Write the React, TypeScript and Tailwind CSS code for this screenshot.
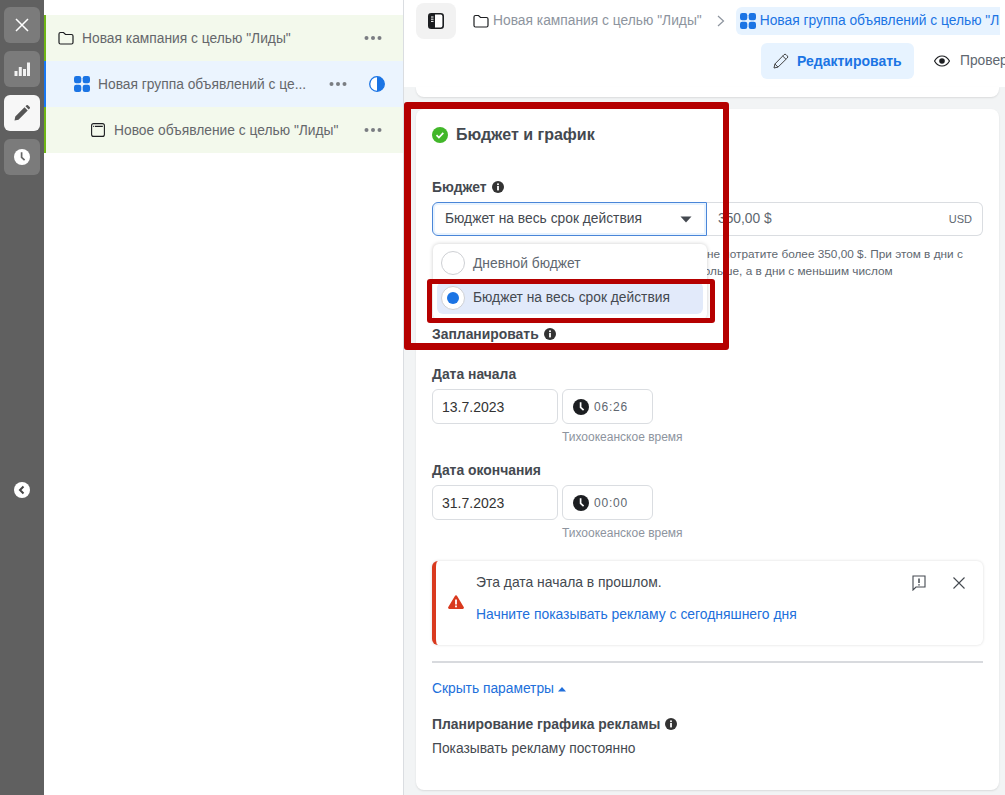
import type { ReactNode } from 'react';

function Folder({ className }: { readonly className: string }) {
  return (
    <svg viewBox="0 0 16 14" className={className} fill="none" stroke="#1c1e21" strokeWidth="1.2">
      <path d="M1 3a1.500 1.500 0 0 1 1.500-1.500h3L7.500 3.500h6A1.500 1.500 0 0 1 15 5v6.500a1.500 1.500 0 0 1-1.500 1.500h-11A1.500 1.500 0 0 1 1 11.500z" />
    </svg>
  );
}

function Grid({ className }: { readonly className: string }) {
  return (
    <svg viewBox="0 0 16 16" className={className} fill="#1b74e4">
      <rect x="0" y="0" width="7.300" height="7.300" rx="2.200" />
      <rect x="8.700" y="0" width="7.300" height="7.300" rx="2.200" />
      <rect x="0" y="8.700" width="7.300" height="7.300" rx="2.200" />
      <rect x="8.700" y="8.700" width="7.300" height="7.300" rx="2.200" />
    </svg>
  );
}

function Dots() {
  return (
    <svg viewBox="0 0 18 4" className="h-1 w-[18px]" fill="#7a7d82">
      <circle cx="2.500" cy="2" r="2" />
      <circle cx="9" cy="2" r="2" />
      <circle cx="15.500" cy="2" r="2" />
    </svg>
  );
}

function Info() {
  return (
    <svg viewBox="0 0 12 12" className="h-3 w-3">
      <circle cx="6" cy="6" r="6" fill="#333" />
      <circle cx="6" cy="3.200" r="1" fill="#fff" />
      <rect x="5.100" y="5" width="1.800" height="4.400" fill="#fff" />
    </svg>
  );
}

function Clock({ className, dark }: { readonly className: string; readonly dark?: boolean }) {
  return (
    <svg viewBox="0 0 16 16" className={className}>
      <circle cx="8" cy="8" r="8" fill={dark ? '#1c1e21' : '#fff'} />
      <path d="M7.600 3.200v5.200l3 2.800" fill="none" stroke={dark ? '#fff' : '#666'} strokeWidth="1.700" />
    </svg>
  );
}

function RailButton({ active, children }: { readonly active?: boolean; readonly children: ReactNode }) {
  return (
    <div className={`flex h-9 w-9 items-center justify-center rounded-md ${active ? 'bg-[#f7f7f7]' : 'bg-[#7b7b7b]'}`}>
      {children}
    </div>
  );
}

function TreeRow({
  active,
  indent,
  icon,
  label,
  status,
}: {
  readonly active?: boolean;
  readonly indent: string;
  readonly icon: ReactNode;
  readonly label: string;
  readonly status?: ReactNode;
}) {
  return (
    <div
      className={`flex h-[46px] items-center border-l-2 ${indent} ${
        active ? 'border-[#1877f2] bg-[#ebf4fe]' : 'border-[#6fb516] bg-[#f3f9ec]'
      }`}
    >
      <div className="flex w-4 shrink-0 justify-center">{icon}</div>
      <span className="ml-2 min-w-0 whitespace-nowrap pt-0.5 text-[13.8px] text-[#65676b]">{label}</span>
      <div className="ml-auto flex items-center">
        <Dots />
        {status}
      </div>
    </div>
  );
}

function FieldLabel({ children, className }: { readonly children: ReactNode; readonly className: string }) {
  return (
    <div className={`flex h-5 items-center gap-[5px] text-[13.9px] font-bold text-[#444950] ${className}`}>
      {children}
    </div>
  );
}

function DateFields({ date, time }: { readonly date: string; readonly time: string }) {
  return (
    <>
      <div className="mt-[5px] flex gap-1">
        <div className="flex h-[35px] w-[126px] items-center rounded-md border border-[#dadde1] pl-[9px] text-sm text-[#333]">
          {date}
        </div>
        <div className="flex h-[35px] w-[91px] items-center gap-[5px] rounded-md border border-[#dadde1] pl-2.5 text-xs tracking-[0.8px] text-[#606770]">
          <Clock className="h-4 w-4" dark />
          {time}
        </div>
      </div>
      <div className="ml-[130px] mt-1 flex h-[18px] items-center whitespace-nowrap text-xs text-[#8d949e]">
        Тихоокеанское время
      </div>
    </>
  );
}

export default function App() {
  return (
    <div className="relative flex h-[795px] w-[1005px] overflow-hidden bg-white font-['Liberation_Sans',sans-serif]">
      <aside className="flex w-11 shrink-0 flex-col items-center gap-2 bg-[#606060] pt-[7px]">
        <RailButton>
          <svg viewBox="0 0 14 14" className="h-3.5 w-3.5" stroke="#fff" strokeWidth="1.500">
            <path d="M1 1l12 12M13 1L1 13" />
          </svg>
        </RailButton>
        <RailButton>
          <svg viewBox="0 0 16 16" className="h-4 w-4" fill="#f2f2f2">
            <rect x="0.500" y="10" width="3" height="5" />
            <rect x="4.800" y="6" width="3" height="9" />
            <rect x="9" y="8" width="3" height="7" />
            <rect x="13" y="1.500" width="3" height="13.500" />
          </svg>
        </RailButton>
        <RailButton active>
          <svg viewBox="0 0 16 16" className="h-4 w-4" fill="#555">
            <path d="M0.500 15.500l.8-4L10.500 2.300l3.200 3.200-9.200 9.200zM11.500 1.300l1-1a1 1 0 0 1 1.400 0l1.800 1.800a1 1 0 0 1 0 1.400l-1 1z" />
          </svg>
        </RailButton>
        <RailButton>
          <Clock className="h-4 w-4" />
        </RailButton>
        <div className="mt-[299px] flex h-4 w-4 items-center justify-center rounded-full bg-white">
          <svg viewBox="0 0 10 10" className="h-2.5 w-2.5" fill="none" stroke="#444" strokeWidth="2">
            <path d="M6.500 1.500L3 5l3.500 3.500" />
          </svg>
        </div>
      </aside>

      <section className="w-[360px] shrink-0 border-r border-[#dadde1] pt-[15px]">
        <TreeRow indent="pl-3 pr-[21px]" icon={<Folder className="h-[14px] w-4" />} label={'Новая кампания с целью "Лиды"'} />
        <TreeRow
          active
          indent="pl-7 pr-[18px]"
          icon={<Grid className="h-4 w-4" />}
          label="Новая группа объявлений с це..."
          status={
            <svg viewBox="0 0 16 16" className="ml-[22px] h-4 w-4">
              <circle cx="8" cy="8" r="7.300" fill="#fff" stroke="#1b74e4" strokeWidth="1.300" />
              <path d="M8 0.700a7.300 7.300 0 0 1 0 14.600z" fill="#1b74e4" />
            </svg>
          }
        />
        <TreeRow
          indent="pl-[44px] pr-[21px]"
          icon={
            <svg viewBox="0 0 14 14" className="h-3.5 w-3.5" fill="none" stroke="#1c1e21" strokeWidth="1.100">
              <rect x="0.600" y="0.600" width="12.800" height="12.800" rx="2" />
              <path d="M2 3.400h.8M3.800 3.400h8" />
            </svg>
          }
          label={'Новое объявление с целью "Лиды"'}
        />
      </section>

      <main className="flex min-w-0 flex-1 flex-col bg-[#f2f4f5]">
        <header className="h-[87px] overflow-hidden bg-white">
          <div className="flex items-center pl-3 pr-[5px] pt-[3px]">
            <div className="flex h-9 w-10 shrink-0 items-center justify-center rounded-lg bg-[#f2f2f2]">
              <svg viewBox="0 0 16 16" className="h-4 w-4">
                <rect x="0.800" y="0.800" width="14.400" height="14.400" rx="2.500" fill="#fff" stroke="#1c1e21" strokeWidth="1.600" />
                <path d="M3 1h4v14H3a2 2 0 0 1-2-2V3a2 2 0 0 1 2-2z" fill="#1c1e21" />
                <path d="M3 4h2.500M3 6.200h2.500M3 8.400h2.500" stroke="#fff" />
              </svg>
            </div>
            <Folder className="ml-[17px] h-[14px] w-4 shrink-0" />
            <span className="ml-1 whitespace-nowrap text-[13.8px] text-[#8d949e]">Новая кампания с целью "Лиды"</span>
            <svg viewBox="0 0 8 12" className="ml-[15px] h-3 w-2 shrink-0" fill="none" stroke="#8d949e" strokeWidth="1.200">
              <path d="M1 1l5.500 5L1 11" />
            </svg>
            <div className="ml-[11px] flex h-7 min-w-0 flex-1 items-center overflow-hidden rounded-l-md bg-[#e7f3ff] pl-1">
              <Grid className="h-4 w-4 shrink-0" />
              <span className="ml-1 whitespace-nowrap text-[13.8px] text-[#1b74e4]">Новая группа объявлений с целью "Лиды"</span>
            </div>
          </div>
          <div className="mt-1 flex items-center pl-[357px]">
            <div className="flex h-9 w-[153px] shrink-0 items-center rounded-md bg-[#e7f3ff] pl-3">
              <svg viewBox="0 0 16 16" className="h-4 w-4" fill="none" stroke="#444" strokeWidth="1">
                <path d="M1 15l.9-4L11 1.700a1.500 1.500 0 0 1 2.100 0l1.200 1.200a1.500 1.500 0 0 1 0 2.100L5 14.100zM1.900 11L5 14.100M9.700 3l3.300 3.300" />
              </svg>
              <span className="ml-[8px] whitespace-nowrap text-sm font-bold text-[#1b74e4]">Редактировать</span>
            </div>
            <svg viewBox="0 0 16 12" className="ml-5 h-3 w-4 shrink-0">
              <path d="M0.500 6C2.500 2.500 5 1 8 1s5.500 1.500 7.500 5c-2 3.500-4.500 5-7.500 5s-5.500-1.500-7.500-5z" fill="none" stroke="#1c1e21" strokeWidth="1.200" />
              <circle cx="8" cy="6" r="2.800" fill="#1c1e21" />
            </svg>
            <span className="ml-[10px] whitespace-nowrap text-[13.8px] text-[#606770]">Проверить</span>
          </div>
        </header>

        <div className="mx-3 mr-1.5 h-2.5 rounded-b-lg bg-white shadow-[0_1px_2px_rgba(0,0,0,0.1)]" />

        <div className="mx-3 mb-[5px] mr-1.5 mt-3 flex-1 rounded-lg bg-white px-4 pt-4 shadow-[0_1px_2px_rgba(0,0,0,0.1)]">
          <div className="flex h-5 items-center gap-2 text-base font-bold text-[#444950]">
            <svg viewBox="0 0 16 16" className="h-4 w-4">
              <circle cx="8" cy="8" r="8" fill="#42b72a" />
              <path d="M4.500 8.200l2.400 2.300 4.400-4.600" fill="none" stroke="#fff" strokeWidth="1.700" />
            </svg>
            Бюджет и график
          </div>

          <FieldLabel className="mt-8">
            Бюджет <Info />
          </FieldLabel>
          <div className="mt-[5px] flex h-[34px] w-[551px]">
            <div className="flex w-[275px] shrink-0 items-center justify-between rounded-l-md border border-[#4a86d8] pl-3 pr-[14px] text-[13.8px] text-[#444950] shadow-[inset_0_0_0_2px_#e7f3ff]">
              Бюджет на весь срок действия
              <svg viewBox="0 0 12 7" className="h-[7px] w-3" fill="#444950">
                <path d="M0.500 0.500h11L6 6.500z" />
              </svg>
            </div>
            <div className="flex flex-1 items-center justify-between rounded-r-md border border-l-0 border-[#dadde1] pl-[11px] pr-2.5 text-[13.8px] text-[#606770]">
              350,00 $
              <span className="text-[11px] text-[#606770]">USD</span>
            </div>
          </div>
          <div className="mt-2.5 whitespace-nowrap text-[11.8px] leading-[17px] text-[#606770]">
            <div className="pl-[275px]">не потратите более 350,00 $. При этом в дни с</div>
            <div className="pl-[265px]">больше, а в дни с меньшим числом</div>
          </div>

          <FieldLabel className="mt-[44px]">
            Запланировать <Info />
          </FieldLabel>

          <FieldLabel className="mt-5">Дата начала</FieldLabel>
          <DateFields date="13.7.2023" time="06:26" />
          <FieldLabel className="mt-3.5">Дата окончания</FieldLabel>
          <DateFields date="31.7.2023" time="00:00" />

          <div className="mt-[19px] flex h-[84px] w-[551px] rounded-md border-l-[4px] border-[#d9391e] bg-white pl-3 pr-[18px] shadow-[0_0_3px_rgba(0,0,0,0.15)]">
            <svg viewBox="0 0 16 14" className="mt-[34px] h-3.5 w-4 shrink-0" fill="#d9391e">
              <path d="M8 0.300a1.300 1.300 0 0 1 1.100.6l6.600 11a1.300 1.300 0 0 1-1.100 2H1.400a1.300 1.300 0 0 1-1.100-2l6.600-11a1.300 1.300 0 0 1 1.100-.6z" />
              <rect x="7.100" y="4.500" width="1.800" height="5" fill="#fff" />
              <rect x="7.100" y="10.500" width="1.800" height="1.800" fill="#fff" />
            </svg>
            <div className="ml-3 flex-1 pt-[11px] text-[13.9px]">
              <div className="h-5 leading-5 text-[#444950]">Эта дата начала в прошлом.</div>
              <div className="mt-3 h-5 leading-5 text-[#216fdb]">Начните показывать рекламу с сегодняшнего дня</div>
            </div>
            <svg viewBox="0 0 14 16" className="mt-[14px] h-4 w-3.5" fill="none" stroke="#444950" strokeWidth="1.100">
              <path d="M1 1h12v11H4l-3 3z" />
              <path d="M7 3.500v4.500M7 9.200v1.300" strokeWidth="1.500" />
            </svg>
            <svg viewBox="0 0 12 12" className="ml-[27px] mt-4 h-3 w-3" fill="none" stroke="#444950" strokeWidth="1.100">
              <path d="M0.500 0.500l11 11M11.500 0.500l-11 11" />
            </svg>
          </div>

          <div className="mt-4 h-0.5 w-[551px] bg-[#d8dade]" />

          <div className="mt-4 flex h-5 items-center gap-1 text-[13.8px] text-[#216fdb]">
            Скрыть параметры
            <svg viewBox="0 0 8 5" className="h-[5px] w-2" fill="#216fdb">
              <path d="M4 0l4 4.500H0z" />
            </svg>
          </div>
          <FieldLabel className="mt-[15px]">
            Планирование графика рекламы <Info />
          </FieldLabel>
          <div className="mt-[5px] h-5 text-[13.8px] leading-5 text-[#444950]">Показывать рекламу постоянно</div>
        </div>
      </main>

      {/* dropdown and the red annotation frames lie over the form */}
      <div className="absolute left-[433px] top-[244px] h-[76px] w-[274px] rounded-md bg-white shadow-[0_0_4px_rgba(0,0,0,0.2)]">
        <div className="flex h-[38px] items-center pl-2 text-[13.8px] text-[#606770]">
          <div className="h-6 w-6 rounded-full border border-[#ced0d4] bg-white" />
          <span className="ml-2 pt-0.5">Дневной бюджет</span>
        </div>
        <div className="mx-1 flex h-8 items-center rounded-md bg-[#e2eafa] pl-1 text-[13.8px] text-[#444950]">
          <div className="flex h-6 w-6 items-center justify-center rounded-full border border-[#ced0d4] bg-white">
            <div className="h-3 w-3 rounded-full bg-[#1b74e4]" />
          </div>
          <span className="ml-2">Бюджет на весь срок действия</span>
        </div>
      </div>
      <div className="pointer-events-none absolute left-[404px] top-[102px] h-[248px] w-[325px] rounded-[3px] border-[7px] border-r-[6px] border-[#b50000]" />
      <div className="pointer-events-none absolute left-[427px] top-[279px] h-[44px] w-[288px] rounded-[3px] border-[5px] border-[#b50000]" />
    </div>
  );
}
